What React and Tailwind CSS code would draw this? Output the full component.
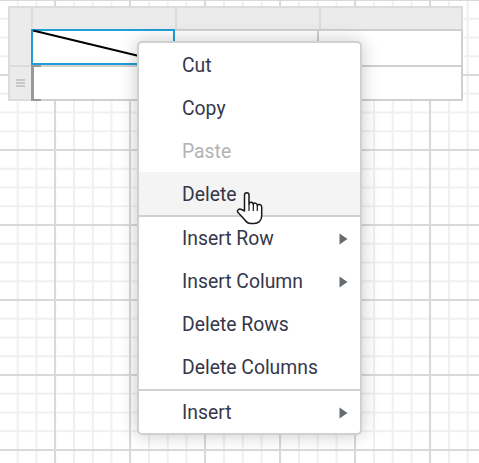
const Arrow = () => (
  <svg width="9" height="12" viewBox="0 0 9 12" className="ml-auto mr-[12px] shrink-0"><path d="M0.5 0.5 L8.5 6 L0.5 11.5 Z" fill="#666b70" /></svg>
);

const Item = ({ label, arrow, disabled, active, low }) => (
  <div className={`flex items-center h-[43px] pl-[43px] text-[19.35px] leading-none ${low ? "pt-[2px]" : "pt-px"} ${disabled ? "text-[#b3b3b3]" : "text-[#35374a]"} ${active ? "bg-[#f4f4f4]" : ""}`}>
    <span>{label}</span>
    {arrow && <Arrow />}
  </div>
);

const Sep = () => <div className="h-[2px] bg-[#d0d0d0]" />;

const Hand = () => (
  <svg width="28" height="34" viewBox="0 0 28 34" className="absolute left-[236px] top-[191px]">
    <path d="M8.5 20 L8.5 4 C8.5 1 13 1 13 4 L13 13 C13.5 10.5 17 10.5 17.3 13.5 C18 11.5 21 11.5 21.3 14.5 C22 13 25.5 13 25.7 16 L25.7 25 C25.7 30 22 32.5 18 32.5 L14.5 32.5 C11.5 32.5 10.5 31 8.5 28.5 L2 21.5 C0.5 19.5 3 17 5.5 18.5 Z" fill="#fff" stroke="#1a1a1a" strokeWidth="1.5" strokeLinejoin="round" />
    <path d="M13 13 L13 20 M17.3 13.5 L17.3 20 M21.3 14.5 L21.3 20" fill="none" stroke="#1a1a1a" strokeWidth="1.2" />
  </svg>
);

const Head = ({ last }) => (
  <div className={`bg-[#ebebeb] border-t-2 border-l-2 border-[#dcdcdc] ${last ? "border-r-2" : ""}`} />
);

const Cell = ({ last }) => (
  <div className={`bg-white border-t-2 border-r-2 border-[#d0d0d0] ${last ? "border-b-2" : ""}`} />
);

export default function App() {
  return (
    <div
      className="relative w-[479px] h-[463px] overflow-hidden bg-white pl-[8px] pt-[6px] font-['Roboto',sans-serif] bg-[linear-gradient(to_right,#d9d9d9_2px,transparent_2px),linear-gradient(to_bottom,#d9d9d9_2px,transparent_2px),linear-gradient(to_right,#f0f0f0_2px,transparent_2px),linear-gradient(to_bottom,#f0f0f0_2px,transparent_2px)] bg-size-[75px_75px,75px_75px,18.75px_18.75px,18.75px_18.75px] bg-position-[54px_74px,54px_74px,-2px_-1px,-2px_-1px]"
    >
      {/* table */}
      <div className="w-[455px] h-[95px] grid grid-cols-[23px_144px_144px_144px] grid-rows-[23px_36px_36px]">
        <Head />
        <Head />
        <Head />
        <Head last />

        <div className="bg-[#ebebeb] border-l-2 border-[#dcdcdc]" />
        <div className="relative bg-white border-2 border-[#1e9fd9]">
          <svg width="144" height="36" viewBox="0 0 144 36" className="absolute -left-[2px] -top-[2px] overflow-visible">
            <line x1="2" y1="1.5" x2="108" y2="27" stroke="#000" strokeWidth="2" />
          </svg>
        </div>
        <Cell />
        <Cell />

        <div className="bg-[#ebebeb] border-l-2 border-b-2 border-t-2 border-[#dcdcdc] flex flex-col items-center justify-center gap-[1px]">
          <div className="w-[9px] h-[2px] bg-[#c8c8c8]" />
          <div className="w-[9px] h-[2px] bg-[#c8c8c8]" />
          <div className="w-[9px] h-[2px] bg-[#c8c8c8]" />
        </div>
        <div className="relative bg-white border-t-2 border-b-2 border-r-2 border-[#d0d0d0]">
          <div className="absolute left-0 -top-[2px] bottom-[-2px] w-[2.5px] bg-[#999999]" />
          <div className="absolute left-0 -top-[2px] w-[10px] h-[2px] bg-[#999999]" />
          <div className="absolute left-0 bottom-[-2px] w-[10px] h-[2px] bg-[#999999]" />
        </div>
        <Cell last />
        <Cell last />
      </div>

      {/* context menu */}
      <div className="absolute left-[137px] top-[41px] w-[225px] h-[394px] bg-white border-2 border-[#d0d0d0] rounded-[5px] shadow-[0_0_18px_rgba(0,0,0,0.22)]">
        <Item label="Cut" low />
        <Item label="Copy" low />
        <Item label="Paste" disabled low />
        <Item label="Delete" active low />
        <Sep />
        <Item label="Insert Row" arrow />
        <Item label="Insert Column" arrow />
        <Item label="Delete Rows" />
        <Item label="Delete Columns" />
        <Sep />
        <Item label="Insert" arrow />
      </div>
      <Hand />
    </div>
  );
}
